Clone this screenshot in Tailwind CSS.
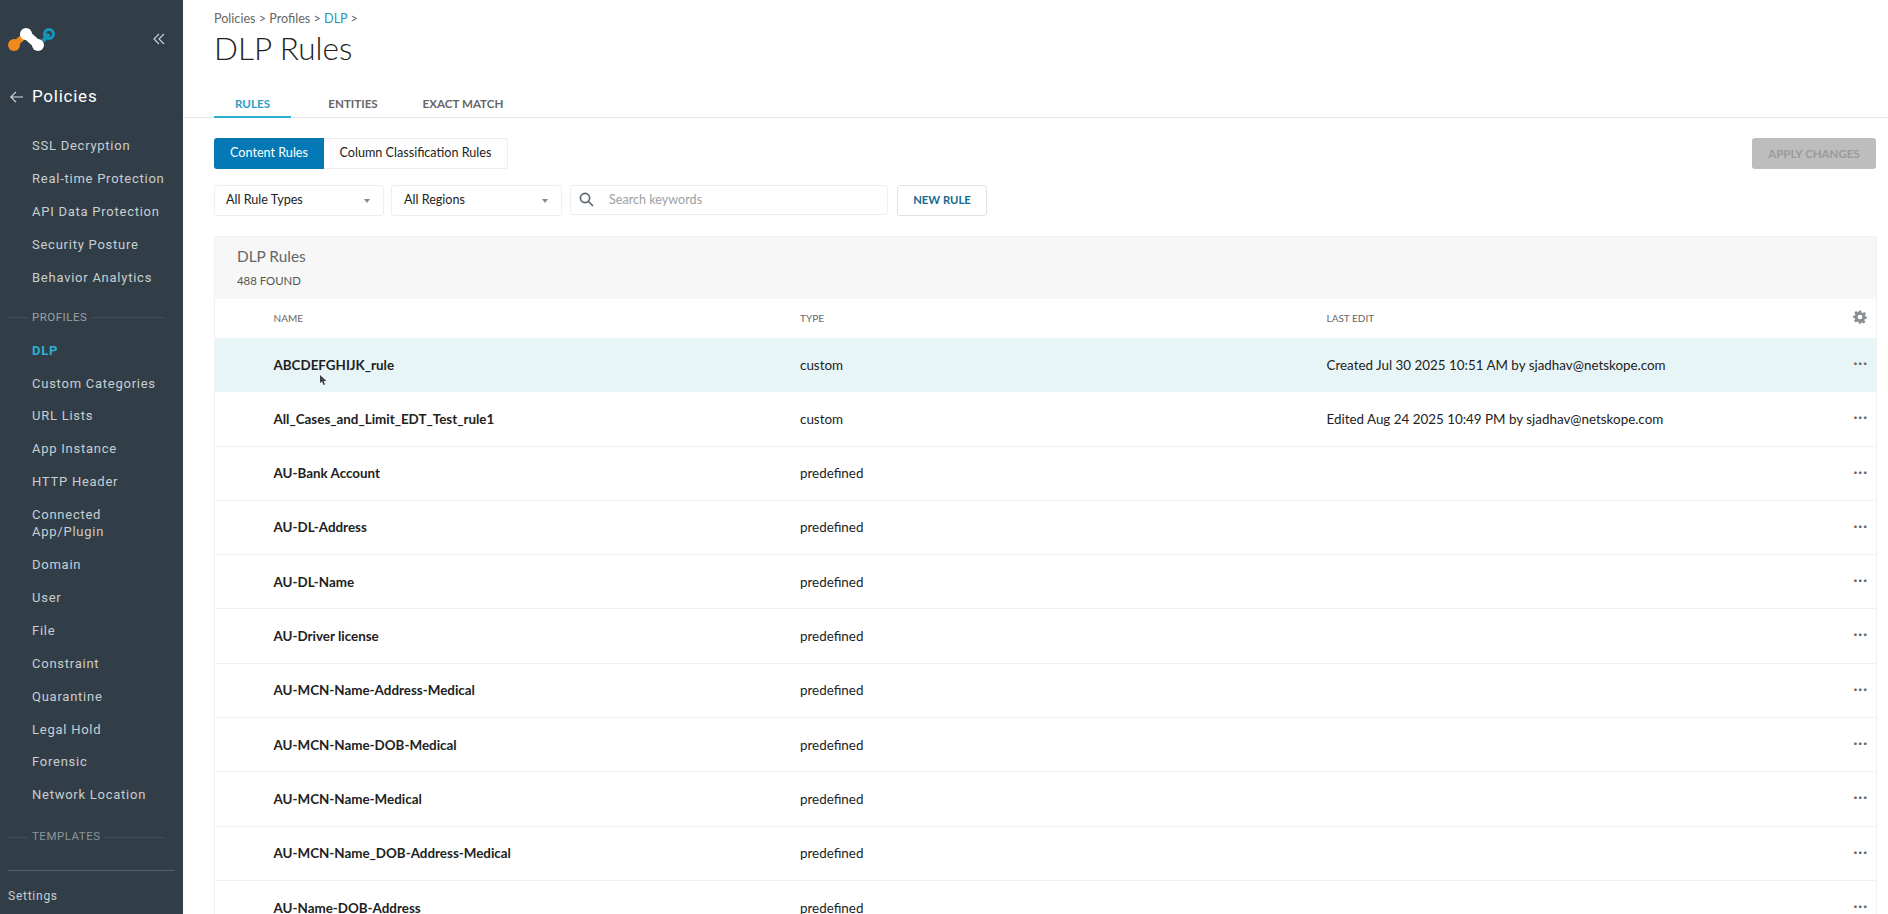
<!DOCTYPE html>
<html lang="en">
<head>
  <meta charset="UTF-8">
  <title>DLP Rules</title>
  <script src="https://cdn.jsdelivr.net/npm/@tailwindcss/browser@4"></script>
</head>
<body class="h-screen overflow-hidden bg-white font-['Lato',sans-serif] text-[13.4px] text-[#222]">
  <div class="flex h-[914px]">
    <!-- sidebar -->
    <aside class="relative flex h-full w-[183px] shrink-0 flex-col overflow-hidden bg-[#323e47] font-['Roboto',sans-serif] text-[13px] tracking-[0.75px] text-[#c8ced2]">
      <div class="flex h-[77px] items-center justify-between pl-[7px] pr-[18px]">
        <svg width="50" height="30" viewBox="7 23 50 30" fill="none">
          <path d="M14 44 L23 36" stroke="#f08a1d" stroke-width="6"/>
          <circle cx="14" cy="44" r="6" fill="#f08a1d"/>
          <path d="M43 40 L49 33" stroke="#1596bb" stroke-width="4"/>
          <circle cx="49" cy="33" r="4.5" stroke="#1596bb" stroke-width="3"/>
          <path d="M26 33 L38 44" stroke="#fff" stroke-width="9"/>
          <circle cx="26" cy="33" r="6" fill="#fff"/>
          <circle cx="38" cy="44" r="6" fill="#fff"/>
        </svg>
        <svg width="12" height="12" viewBox="0 0 12 12" fill="none" stroke="#c8ced2" stroke-width="1.2"><path d="M6 1 1 6l5 5M11 1 6 6l5 5"/></svg>
      </div>
      <div class="flex h-[40px] items-center pl-[10px] text-[17px] text-white">
        <svg class="mr-[9px]" width="13" height="12" viewBox="0 0 13 12" fill="none" stroke="#d5dadd" stroke-width="1.2"><path d="M6 .8.8 6 6 11.2M.8 6H13"/></svg>
        Policies
      </div>
      <nav class="mt-[12px] flex flex-col pl-[32px]">
        <a class="flex h-[33px] items-center">SSL Decryption</a>
        <a class="flex h-[33px] items-center">Real-time Protection</a>
        <a class="flex h-[33px] items-center">API Data Protection</a>
        <a class="flex h-[33px] items-center">Security Posture</a>
        <a class="flex h-[33px] items-center">Behavior Analytics</a>
      </nav>
      <div class="mt-[7px] flex h-[33px] items-center pl-[9px] pr-[18px] text-[11.5px] tracking-[0.5px] text-[#98a2a9]">
        <span class="h-px w-[19px] bg-[#414e57]"></span>
        <span class="px-[4px]">PROFILES</span>
        <span class="h-px flex-1 bg-[#414e57]"></span>
      </div>
      <nav class="flex flex-col pl-[32px]">
        <a class="flex h-[32.9px] items-center font-bold text-[#2fb0d3]">DLP</a>
        <a class="flex h-[32.9px] items-center">Custom Categories</a>
        <a class="flex h-[32.9px] items-center">URL Lists</a>
        <a class="flex h-[32.9px] items-center">App Instance</a>
        <a class="flex h-[32.9px] items-center">HTTP Header</a>
        <a class="flex h-[50px] items-center leading-[17px]">Connected<br>App/Plugin</a>
        <a class="flex h-[32.9px] items-center">Domain</a>
        <a class="flex h-[32.9px] items-center">User</a>
        <a class="flex h-[32.9px] items-center">File</a>
        <a class="flex h-[32.9px] items-center">Constraint</a>
        <a class="flex h-[32.9px] items-center">Quarantine</a>
        <a class="flex h-[32.9px] items-center">Legal Hold</a>
        <a class="flex h-[32.9px] items-center">Forensic</a>
        <a class="flex h-[32.9px] items-center">Network Location</a>
      </nav>
      <div class="mt-[9px] flex h-[33px] items-center pl-[9px] pr-[18px] text-[11.5px] tracking-[0.5px] text-[#8a959c]">
        <span class="h-px w-[19px] bg-[#414e57]"></span>
        <span class="px-[4px]">TEMPLATES</span>
        <span class="h-px flex-1 bg-[#414e57]"></span>
      </div>
      <div class="absolute bottom-0 left-0 w-full bg-[#323e47]">
        <div class="mx-[8px] h-px bg-[#55626b]"></div>
        <div class="flex h-[43px] items-center pl-[8px] pt-[7px] text-[12px]">Settings</div>
      </div>
    </aside>

    <!-- main -->
    <main class="relative min-w-0 flex-1">
      <div class="pl-[31px] pt-[11px] text-[12.6px] leading-[16px] text-[#666]">Policies &gt; Profiles &gt; <span class="text-[#2a93b8]">DLP</span> &gt;</div>
      <h1 class="pl-[31px] pt-[1px] text-[31.5px] font-light leading-[40px] text-[#222]">DLP Rules</h1>

      <div class="mt-[20px] flex h-[30px] border-b border-[#e3e6e8] pl-[31px] text-[11.6px] font-bold text-[#666]">
        <div class="h-[30px] w-[77px] border-b-[2px] border-[#2fb0d3] pt-[7px] text-center text-[#2a9fc4]">RULES</div>
        <div class="w-[124px] pt-[7px] text-center">ENTITIES</div>
        <div class="w-[96px] pt-[7px] text-center">EXACT MATCH</div>
      </div>

      <div class="flex items-start justify-between pl-[31px] pr-[12px] pt-[20px]">
        <div class="flex h-[31px] text-[12.6px]">
          <div class="flex w-[110px] items-center justify-center rounded-l-[3px] bg-[#0479b5] text-white">Content Rules</div>
          <div class="flex w-[184px] items-center justify-center rounded-r-[3px] border border-l-0 border-[#eceeef] text-[#222]">Column Classification Rules</div>
        </div>
        <div class="flex h-[31px] w-[124px] items-center justify-center rounded-[3px] bg-[#bdbdbd] text-[11.5px] font-bold text-[#9a9a9a]">APPLY CHANGES</div>
      </div>

      <div class="flex gap-[7px] pl-[31px] pt-[16px] text-[12.6px]">
        <div class="flex h-[31px] w-[170px] items-center justify-between rounded-[3px] border border-[#eceeef] pl-[11px] pr-[13px]">
          All Rule Types
          <span class="h-0 w-0 border-x-[3.5px] border-t-[4px] border-x-transparent border-t-[#888]"></span>
        </div>
        <div class="flex h-[31px] w-[171px] items-center justify-between rounded-[3px] border border-[#eceeef] pl-[12px] pr-[13px]">
          All Regions
          <span class="h-0 w-0 border-x-[3.5px] border-t-[4px] border-x-transparent border-t-[#888]"></span>
        </div>
        <div class="ml-[1px] flex h-[30px] w-[318px] items-center rounded-[3px] border border-[#eceeef] pl-[8px] text-[#9b9fa3]">
          <svg class="mr-[15px] mb-[2px]" width="15" height="15" viewBox="0 0 15 15" fill="none" stroke="#5c6670" stroke-width="1.7"><circle cx="6" cy="6" r="4.6"/><path d="m9.5 9.5 4.5 4.5"/></svg>
          Search keywords
        </div>
        <div class="ml-[2px] flex h-[31px] w-[90px] items-center justify-center rounded-[3px] border border-[#dfe2e4] text-[11.3px] font-bold text-[#17688f]">NEW RULE</div>
      </div>

      <!-- table -->
      <section class="mr-[11px] ml-[31px] mt-[20px] rounded-t-[3px] border-x border-[#eff1f2]">
        <div class="h-[63px] border-t border-[#f0f0f0] bg-[#f7f7f7] pl-[22px] pt-[9px]">
          <div class="text-[15.4px] leading-[20px] text-[#666]">DLP Rules</div>
          <div class="mt-[7px] text-[11.4px] leading-[16px] text-[#555]">488 FOUND</div>
        </div>
        <div class="relative grid h-[39px] grid-cols-[526.5px_526.5px_1fr] items-center pl-[58.5px] text-[10px] text-[#666]">
          <div>NAME</div><div>TYPE</div><div>LAST EDIT</div>
          <svg class="absolute right-[9px] top-[11px]" width="14" height="14" viewBox="0 0 24 24" fill="#8a8f93"><path d="M10 1h4l.6 3.2 2.2.9 2.7-1.8 2.8 2.8-1.8 2.7.9 2.2L23.6 11v4l-3.2.6-.9 2.2 1.8 2.7-2.8 2.8-2.7-1.8-2.2.9L13 23.6h-3l-.6-3.2-2.2-.9-2.7 1.8-2.8-2.8 1.8-2.7-.9-2.2L0 13v-3l3.2-.6.9-2.2-1.8-2.7 2.8-2.8 2.7 1.8 2.2-.9zM12 8a4 4 0 1 0 0 8 4 4 0 0 0 0-8z" fill-rule="evenodd"/></svg>
        </div>

        <div class="relative grid h-[54.3px] grid-cols-[526.5px_526.5px_1fr] items-center bg-[#e8f5f7] pl-[58.5px]">
          <div class="font-bold">ABCDEFGHIJK_rule</div><div>custom</div><div>Created Jul 30 2025 10:51 AM by sjadhav@netskope.com</div>
          <span class="absolute right-[8px] top-[18px] text-[14px] font-bold leading-[14px] tracking-[1px] text-[#666]">···</span>
          <svg class="absolute left-[105px] top-[37px]" width="7" height="10" viewBox="0 0 7 10" fill="#3b3f42"><path d="M0 0v8l2-1.6L3.5 10l1.5-.6L3.6 6H6.5z"/></svg>
        </div>
        <div class="relative grid h-[54.3px] grid-cols-[526.5px_526.5px_1fr] items-center border-b border-[#eff1f2] pl-[58.5px]">
          <div class="font-bold">All_Cases_and_Limit_EDT_Test_rule1</div><div>custom</div><div>Edited Aug 24 2025 10:49 PM by sjadhav@netskope.com</div>
          <span class="absolute right-[8px] top-[18px] text-[14px] font-bold leading-[14px] tracking-[1px] text-[#666]">···</span>
        </div>
        <div class="relative grid h-[54.3px] grid-cols-[526.5px_526.5px_1fr] items-center border-b border-[#eff1f2] pl-[58.5px]">
          <div class="font-bold">AU-Bank Account</div><div>predefined</div><div></div>
          <span class="absolute right-[8px] top-[18px] text-[14px] font-bold leading-[14px] tracking-[1px] text-[#666]">···</span>
        </div>
        <div class="relative grid h-[54.3px] grid-cols-[526.5px_526.5px_1fr] items-center border-b border-[#eff1f2] pl-[58.5px]">
          <div class="font-bold">AU-DL-Address</div><div>predefined</div><div></div>
          <span class="absolute right-[8px] top-[18px] text-[14px] font-bold leading-[14px] tracking-[1px] text-[#666]">···</span>
        </div>
        <div class="relative grid h-[54.3px] grid-cols-[526.5px_526.5px_1fr] items-center border-b border-[#eff1f2] pl-[58.5px]">
          <div class="font-bold">AU-DL-Name</div><div>predefined</div><div></div>
          <span class="absolute right-[8px] top-[18px] text-[14px] font-bold leading-[14px] tracking-[1px] text-[#666]">···</span>
        </div>
        <div class="relative grid h-[54.3px] grid-cols-[526.5px_526.5px_1fr] items-center border-b border-[#eff1f2] pl-[58.5px]">
          <div class="font-bold">AU-Driver license</div><div>predefined</div><div></div>
          <span class="absolute right-[8px] top-[18px] text-[14px] font-bold leading-[14px] tracking-[1px] text-[#666]">···</span>
        </div>
        <div class="relative grid h-[54.3px] grid-cols-[526.5px_526.5px_1fr] items-center border-b border-[#eff1f2] pl-[58.5px]">
          <div class="font-bold">AU-MCN-Name-Address-Medical</div><div>predefined</div><div></div>
          <span class="absolute right-[8px] top-[18px] text-[14px] font-bold leading-[14px] tracking-[1px] text-[#666]">···</span>
        </div>
        <div class="relative grid h-[54.3px] grid-cols-[526.5px_526.5px_1fr] items-center border-b border-[#eff1f2] pl-[58.5px]">
          <div class="font-bold">AU-MCN-Name-DOB-Medical</div><div>predefined</div><div></div>
          <span class="absolute right-[8px] top-[18px] text-[14px] font-bold leading-[14px] tracking-[1px] text-[#666]">···</span>
        </div>
        <div class="relative grid h-[54.3px] grid-cols-[526.5px_526.5px_1fr] items-center border-b border-[#eff1f2] pl-[58.5px]">
          <div class="font-bold">AU-MCN-Name-Medical</div><div>predefined</div><div></div>
          <span class="absolute right-[8px] top-[18px] text-[14px] font-bold leading-[14px] tracking-[1px] text-[#666]">···</span>
        </div>
        <div class="relative grid h-[54.3px] grid-cols-[526.5px_526.5px_1fr] items-center border-b border-[#eff1f2] pl-[58.5px]">
          <div class="font-bold">AU-MCN-Name_DOB-Address-Medical</div><div>predefined</div><div></div>
          <span class="absolute right-[8px] top-[18px] text-[14px] font-bold leading-[14px] tracking-[1px] text-[#666]">···</span>
        </div>
        <div class="relative grid h-[54.3px] grid-cols-[526.5px_526.5px_1fr] items-center pl-[58.5px]">
          <div class="font-bold">AU-Name-DOB-Address</div><div>predefined</div><div></div>
          <span class="absolute right-[8px] top-[18px] text-[14px] font-bold leading-[14px] tracking-[1px] text-[#666]">···</span>
        </div>
      </section>
    </main>
  </div>
</body>
</html>
